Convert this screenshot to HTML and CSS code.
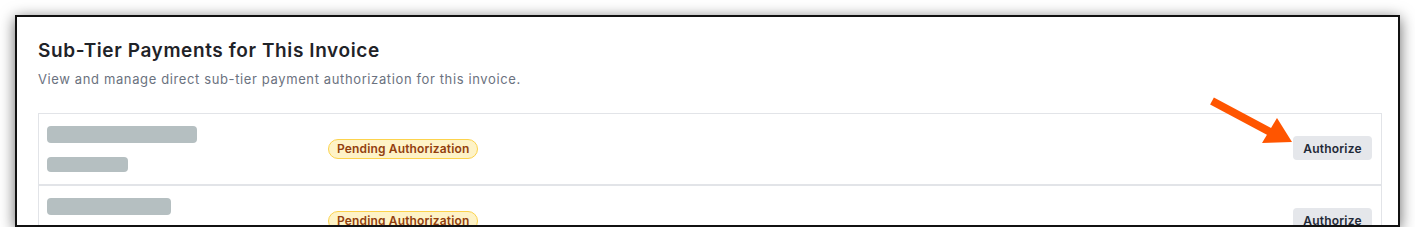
FILE: index.html
```html
<!DOCTYPE html>
<html lang="en">
<head>
<meta charset="utf-8">
<title>Sub-Tier Payments</title>
<link rel="stylesheet" href="styles.css">
</head>
<body>
<div class="window">
  <div class="panel">
    <h2 class="title">Sub-Tier Payments for This Invoice</h2>
    <p class="subtitle">View and manage direct sub-tier payment authorization for this invoice.</p>
    <div class="list">
      <div class="row">
        <div class="names">
          <div class="skel skel-a" style="width:150px"></div>
          <div class="skel skel-b" style="width:81px"></div>
        </div>
        <div class="status"><span class="badge">Pending Authorization</span></div>
        <button class="btn">Authorize</button>
      </div>
      <div class="row">
        <div class="names">
          <div class="skel skel-a" style="width:124px"></div>
          <div class="skel skel-b" style="width:90px"></div>
        </div>
        <div class="status"><span class="badge">Pending Authorization</span></div>
        <button class="btn">Authorize</button>
      </div>
    </div>
  </div>
  <svg class="arrow" width="100" height="60" viewBox="0 0 100 60" aria-hidden="true">
    <line x1="12" y1="11" x2="72" y2="43" stroke="#ff5500" stroke-width="8"/>
    <polygon points="77,28 62,53 92,52" fill="#ff5500"/>
  </svg>
</div>
</body>
</html>
```
FILE: styles.css
```css
* { box-sizing: border-box; }
html, body { margin: 0; padding: 0; background: #ffffff; }
body { font-family: Inter, "Noto Sans", sans-serif; }

.window {
  position: relative;
  margin: 15px 0 0 15px;
  width: 1385px;
  height: 212px;
  border: 2px solid #111;
  background: #fff;
  overflow: hidden;
  box-shadow: 0 3px 14px rgba(0, 0, 0, 0.6);
}

.panel { padding: 20px 16px 0 21px; }

.title {
  margin: 0;
  font-size: 19px;
  line-height: 28px;
  font-weight: 600;
  letter-spacing: 0.6px;
  color: #1f2328;
}

.subtitle {
  margin: 4px 0 0;
  font-size: 13px;
  line-height: 20px;
  letter-spacing: 0.62px;
  color: #6b7280;
}

.list { margin-top: 24px; }

.row {
  display: flex;
  align-items: center;
  border: 1px solid #e2e4e8;
  padding: 11px 9px 13px 8px;
  height: 72px;
}

.names {
  width: 281px;
  display: flex;
  flex-direction: column;
  gap: 14px;
  margin-top: 2px;
}
.skel { background: #b5bfc1; border-radius: 4px; }
.skel-a { height: 17px; }
.skel-b { height: 15px; }

.status { flex: 1; }

.badge {
  display: inline-block;
  height: 20px;
  line-height: 18px;
  padding: 0 8px;
  border: 1px solid #fcd34d;
  border-radius: 10px;
  background: #fef3c7;
  color: #92400e;
  font-size: 12px;
  font-weight: 600;
  letter-spacing: 0.15px;
}

.btn {
  font-family: inherit;
  height: 24px;
  width: 79px;
  border: none;
  border-radius: 4px;
  background: #e5e7eb;
  color: #1f2937;
  font-size: 12px;
  font-weight: 600;
  letter-spacing: 0.2px;
  padding: 0;
}

.arrow {
  position: absolute;
  left: 1183px;
  top: 73px;
}
```
